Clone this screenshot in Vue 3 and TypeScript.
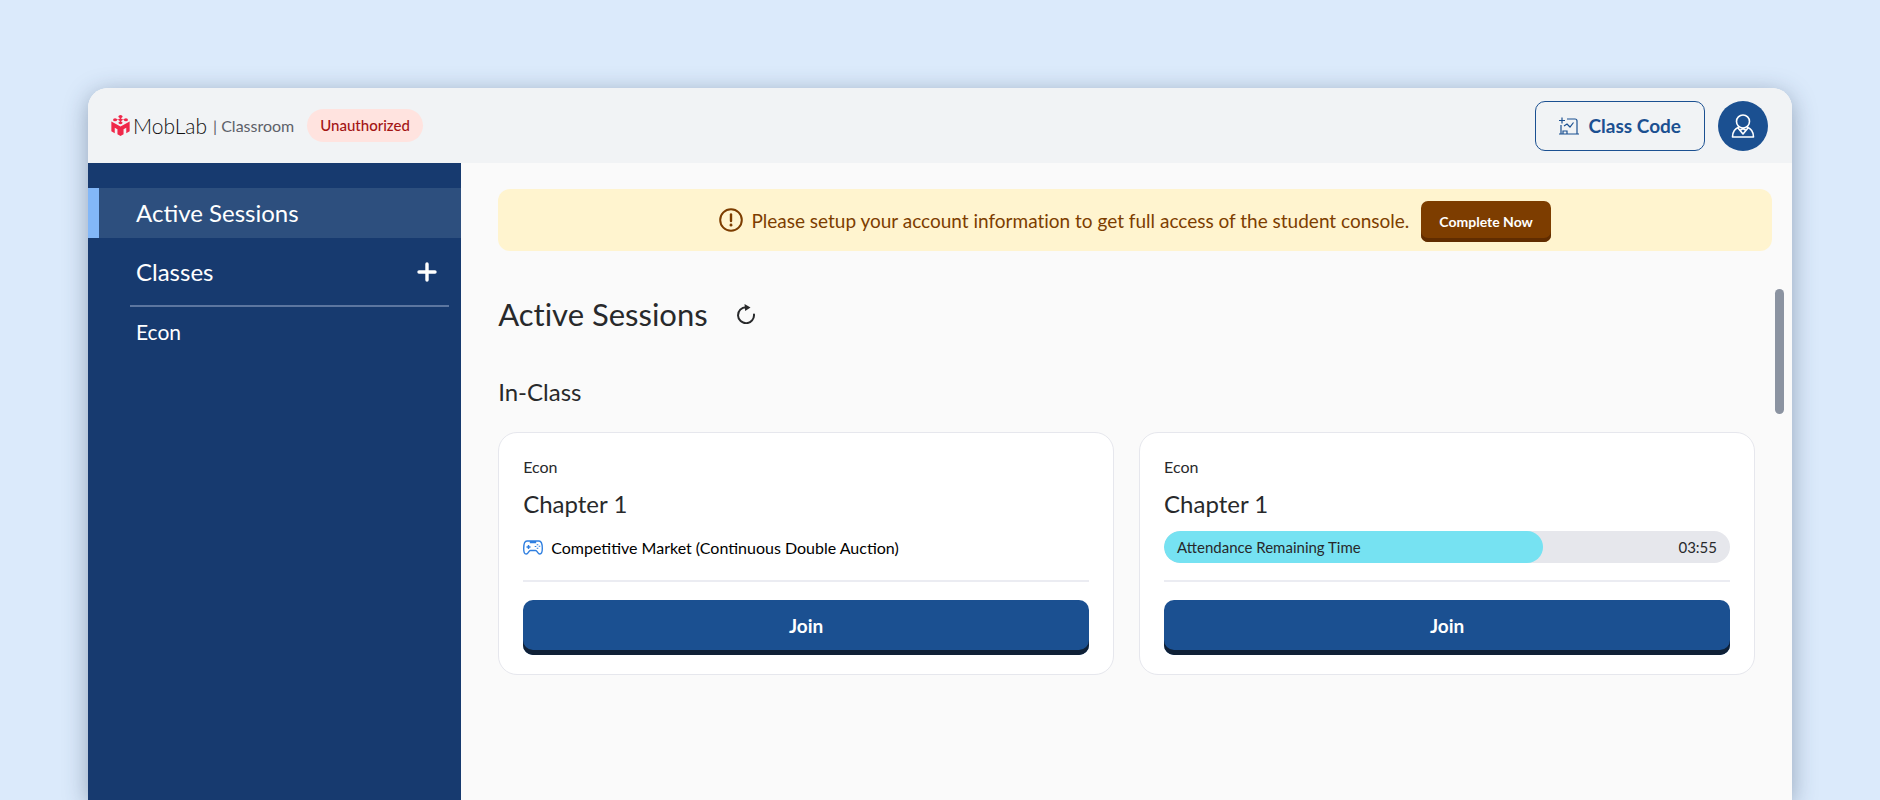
<script setup lang="ts">
interface Session {
  id: number
  course: string
  title: string
  game?: string
  remaining?: string
  percent?: number
}

const courses: string[] = ['Econ']

const sessions: Session[] = [
  { id: 1, course: 'Econ', title: 'Chapter 1', game: 'Competitive Market (Continuous Double Auction)' },
  { id: 2, course: 'Econ', title: 'Chapter 1', remaining: '03:55', percent: 67 },
]
</script>

<template>
  <div class="page">
    <div class="window">
      <header class="topbar">
        <a class="brand" href="#">
          <svg class="brand-mark" viewBox="0 0 56 62" aria-hidden="true">
            <g fill="#f0284a">
              <ellipse cx="28" cy="4.500" rx="6" ry="4.500" />
              <ellipse cx="12" cy="14" rx="6" ry="4.500" />
              <ellipse cx="28" cy="14" rx="6" ry="4" />
              <ellipse cx="44" cy="14" rx="6" ry="4.500" />
              <ellipse cx="28" cy="23" rx="6" ry="4" />
              <path d="M26.500 4H29.500V24H26.500ZM12 13H44V15H12Z" />
              <path d="M1 19 28 34 55 19V48L45 54V38L37 42V57L28 62 19 57V42L11 38V54L1 48Z" />
            </g>
          </svg>
          <span class="brand-name">MobLab</span>
          <span class="brand-sub">| Classroom</span>
        </a>
        <span class="badge">Unauthorized</span>
        <div class="actions">
          <button class="code-btn" type="button">
            <svg viewBox="0 0 20 18" class="code-icon" fill="none" stroke="currentColor" stroke-width="1.2" aria-hidden="true">
              <path d="M3 0.500V6.500M0 3.500H6M8 2H16Q18 2 18 4V16.500M2 8V16.500M0 17H20M5 9 8 7 11 10 14.500 5.500M4 16.500V14H8V16.500" />
            </svg>
            Class Code
          </button>
          <button class="avatar" type="button" aria-label="Account">
            <svg viewBox="0 0 24 24" fill="none" stroke="currentColor" stroke-width="1.6" stroke-linejoin="round" aria-hidden="true">
              <circle cx="12" cy="7.500" r="6.500" />
              <path d="M8 13C4 14.500 1.500 18 1.500 23H22.500C22.500 18 20 14.500 16 13M7 14 12 20 17 14M9 16.500 12 14.500 15 16.500" />
            </svg>
          </button>
        </div>
      </header>

      <div class="body">
        <nav class="sidebar">
          <a class="nav-item active" href="#">Active Sessions</a>
          <div class="nav-head">
            <h2>Classes</h2>
            <button class="add" type="button" aria-label="Add class">
              <svg viewBox="0 0 20 20" fill="none" stroke="currentColor" stroke-width="3.400" stroke-linecap="round" aria-hidden="true">
                <path d="M10 2V18M2 10H18" />
              </svg>
            </button>
          </div>
          <a v-for="c in courses" :key="c" class="course" href="#">{{ c }}</a>
        </nav>

        <main class="main">
          <div class="banner" role="status">
            <svg class="warn" viewBox="0 0 24 24" fill="none" stroke="currentColor" stroke-width="2" stroke-linecap="round" aria-hidden="true">
              <circle cx="12" cy="12" r="10.800" />
              <path d="M12 6.500V13" stroke-width="2.400" />
              <path d="M12 17V17.200" stroke-width="2.800" />
            </svg>
            <span>Please setup your account information to get full access of the student console.</span>
            <button class="complete" type="button">Complete Now</button>
          </div>

          <div class="scroll">
            <div class="title-row">
              <h1>Active Sessions</h1>
              <button class="refresh" type="button" aria-label="Refresh">
                <svg viewBox="0 0 20 20" fill="none" stroke="currentColor" stroke-width="2" stroke-linecap="round" aria-hidden="true">
                  <path d="M18 10.500A8 8 0 1 1 10 3.200" />
                  <path d="M8.500 0 14.500 3.400 9.200 7Z" fill="currentColor" stroke="none" />
                </svg>
              </button>
            </div>
            <h2 class="section">In-Class</h2>
            <div class="cards">
              <article v-for="s in sessions" :key="s.id" class="card">
                <p class="card-course">{{ s.course }}</p>
                <h3>{{ s.title }}</h3>
                <div v-if="s.game" class="game">
                  <svg viewBox="0 0 20 15" fill="none" stroke="currentColor" stroke-width="1.4" aria-hidden="true">
                    <path d="M4 1H7.500V2.500H12.500V1H16C18.500 1 19.300 4 19.300 8.500 19.300 12.500 18.500 14 16.800 14 14.500 14 14.500 10.500 12.500 10.500H7.500C5.500 10.500 5.500 14 3.200 14 1.500 14 0.700 12.500 0.700 8.500 0.700 4 1.500 1 4 1ZM7.500 1H12.500" />
                    <path d="M5.500 5V9M3.500 7H7.500" />
                    <path d="M14.500 4.300V5.300M16.500 5.800V6.800M12.500 6V7M14.500 7.800V8.800" stroke-width="1.600" />
                  </svg>
                  <span>{{ s.game }}</span>
                </div>
                <div v-else class="timer">
                  <div class="timer-fill" :style="{ width: s.percent + '%' }"></div>
                  <span>Attendance Remaining Time</span>
                  <span>{{ s.remaining }}</span>
                </div>
                <hr />
                <button class="join" type="button">Join</button>
              </article>
            </div>
            <div class="thumb"></div>
          </div>
        </main>
      </div>
    </div>
  </div>
</template>

<style>
body {
  margin: 0;
  background: #dbeafb;
}
</style>

<style scoped>
.page {
  box-sizing: border-box;
  height: 100vh;
  padding: 88px 88px 0;
  overflow: hidden;
  background: #dbeafb;
  font-family: Lato, "Liberation Sans", sans-serif;
  font-size: 16px;
  color: #28292b;
}
.page * { box-sizing: border-box; }
h1, h2, h3, p { margin: 0; font-weight: 400; }
button { padding: 0; border: 0; font: inherit; cursor: pointer; }
a { color: inherit; text-decoration: none; }
svg { display: block; flex: none; }

.window {
  display: flex;
  flex-direction: column;
  height: 100%;
  border-radius: 20px 20px 0 0;
  background: #fafafa;
  box-shadow: 0 5px 25px rgba(40, 60, 90, 0.4);
}
.topbar {
  display: flex;
  align-items: center;
  flex: none;
  height: 75px;
  padding: 0 24px 0 23px;
  border-radius: 20px 20px 0 0;
  background: #f1f3f5;
}
.brand { display: flex; align-items: center; }
.brand-mark { width: 19px; height: 21px; }
.brand-name { margin-left: 3px; color: #111; font-size: 21px; font-weight: 300; }
.brand-sub { margin-left: 6px; font-size: 16px; color: #5d6169; }
.badge {
  margin-left: 13px;
  padding: 0 13px;
  border-radius: 17px;
  background: #ffe3df;
  color: #a31515;
  font-size: 15px;
  font-weight: 500;
  line-height: 33px;
}
.actions { display: flex; gap: 13px; margin-left: auto; }
.code-btn {
  display: flex;
  align-items: center;
  gap: 10px;
  height: 50px;
  padding: 0 23px;
  border: 1px solid #1b5091;
  border-radius: 10px;
  background: transparent;
  color: #1b5091;
  font-size: 19px;
  font-weight: 700;
}
.code-icon { width: 20px; height: 18px; }
.avatar {
  display: grid;
  place-items: center;
  width: 50px;
  height: 50px;
  border-radius: 50%;
  background: #1b5091;
  color: #fff;
}
.avatar svg { width: 24px; height: 24px; }

.body { display: flex; flex: 1; min-height: 0; }
.sidebar {
  width: 21.9%;
  flex: none;
  padding-top: 25px;
  background: #173a6f;
  color: #fff;
  font-size: 24px;
}
.nav-item {
  display: block;
  height: 50px;
  padding-left: 37px;
  border-left: 11px solid #82b7f8;
  background: #2d4f7e;
  line-height: 50px;
}
.nav-head {
  display: flex;
  align-items: center;
  justify-content: space-between;
  height: 69px;
  margin: 0 12px 0 42px;
  padding: 0 12px 0 6px;
  border-bottom: 2px solid #5c76a0;
}
.nav-head h2 { font-size: 24px; }
.add { background: none; color: #fff; }
.add svg { width: 20px; height: 20px; }
.course {
  display: block;
  padding-left: 48px;
  font-size: 21px;
  line-height: 50px;
}

.main {
  display: flex;
  flex: 1;
  flex-direction: column;
  min-width: 0;
  padding: 26px 20px 0 37px;
}
.banner {
  display: flex;
  align-items: center;
  justify-content: center;
  flex: none;
  height: 62px;
  border-radius: 12px;
  background: #fff4cf;
  color: #7d3d00;
  font-size: 19px;
  font-variant-ligatures: none;
}
.warn { width: 24px; height: 24px; margin-right: 8px; }
.complete {
  height: 41px;
  margin: 3px 0 0 12px;
  padding: 0 18px;
  border-radius: 7px;
  background: #7d3d00;
  box-shadow: inset 0 -4px #602c00;
  color: #fff;
  font-size: 14px;
  font-weight: 700;
}
.scroll { position: relative; flex: 1; min-height: 0; padding: 38px 17px 0 0; }
.title-row { display: flex; align-items: center; gap: 28px; height: 50px; }
h1 { font-size: 31px; line-height: 50px; font-variant-ligatures: none; }
.refresh { background: none; color: inherit; }
.refresh svg { width: 20px; height: 20px; }
.section { margin-top: 38px; font-size: 24px; line-height: 30px; }
.cards { display: grid; grid-template-columns: 1fr 1fr; gap: 25px; margin-top: 25px; }
.card {
  padding: 23px 24px 19px;
  border: 1px solid #e6e7ed;
  border-radius: 19px;
  background: #fff;
}
.card-course { font-size: 16px; line-height: 22px; }
h3 { margin-top: 9px; font-size: 24px; line-height: 34px; }
.game {
  display: flex;
  align-items: center;
  gap: 8px;
  height: 32px;
  margin-top: 10px;
  color: #000;
  font-size: 16px;
}
.game svg { width: 20px; height: 15px; color: #2f7fe0; }
.timer {
  position: relative;
  display: flex;
  align-items: center;
  justify-content: space-between;
  height: 32px;
  margin-top: 10px;
  padding: 0 13px;
  overflow: hidden;
  border-radius: 16px;
  background: #e6e7ec;
  font-size: 15px;
}
.timer span { position: relative; }
.timer-fill {
  position: absolute;
  inset: 0 auto 0 0;
  border-radius: 16px;
  background: #76e2f2;
}
hr { height: 2px; margin: 17px 0 18px; border: 0; background: #ebecf2; }
.join {
  display: block;
  width: 100%;
  height: 55px;
  padding-bottom: 5px;
  border-radius: 10px;
  background: #1b5091;
  box-shadow: inset 0 -5px #0f2036;
  color: #fff;
  font-size: 19px;
  font-weight: 700;
}
.thumb {
  position: absolute;
  top: 38px;
  right: -12px;
  width: 9px;
  height: 125px;
  border-radius: 5px;
  background: #8b93a1;
}
</style>
